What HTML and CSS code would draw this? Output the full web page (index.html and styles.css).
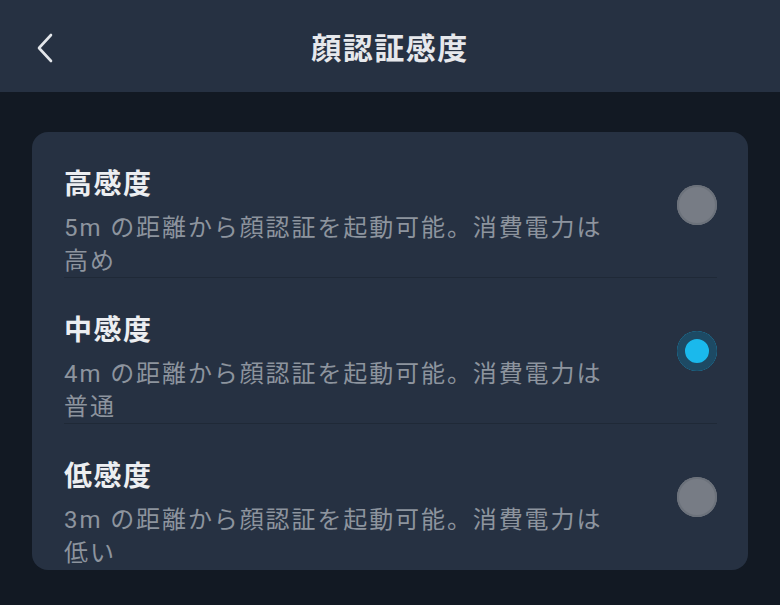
FILE: index.html
```html
<!DOCTYPE html>
<html lang="ja">
<head>
    <meta charset="UTF-8">
    <meta name="viewport" content="width=device-width, initial-scale=1.0">
    <title>顔認証感度</title>
    <link rel="stylesheet" href="styles.css">
</head>
<body>

    <header class="top-bar">
        <button class="back-btn" aria-label="戻る">
            <svg width="22" height="32" viewBox="0 0 22 32">
                <path d="M17 3 L5 16 L17 29" fill="none" stroke="#e3e6ea" stroke-width="2.6" stroke-linecap="round" stroke-linejoin="round"/>
            </svg>
        </button>
        <h1>顔認証感度</h1>
    </header>

    <div class="options-card">
        <div class="option">
            <div class="option-text">
                <div class="option-title">高感度</div>
                <div class="option-desc">5m の距離から顔認証を起動可能。消費電力は高め</div>
            </div>
            <span class="radio"></span>
        </div>
        <div class="option">
            <div class="option-text">
                <div class="option-title">中感度</div>
                <div class="option-desc">4m の距離から顔認証を起動可能。消費電力は普通</div>
            </div>
            <span class="radio checked"></span>
        </div>
        <div class="option">
            <div class="option-text">
                <div class="option-title">低感度</div>
                <div class="option-desc">3m の距離から顔認証を起動可能。消費電力は低い</div>
            </div>
            <span class="radio"></span>
        </div>
    </div>

</body>
</html>
```

FILE: styles.css
```css
body {
    margin: 0;
    font-family: Roboto, 'Noto Sans CJK JP', sans-serif;
    background-color: #121923;
    height: 605px;
}

.top-bar {
    height: 92px;
    background-color: #263142;
    display: flex;
    align-items: center;
    justify-content: center;
    position: relative;
}

.top-bar h1 {
    margin: 0;
    font-size: 30px;
    font-weight: 700;
    letter-spacing: 1.5px;
    color: #e6e8ec;
}

.back-btn {
    position: absolute;
    left: 34px;
    top: 32px;
    padding: 0;
    background: none;
    border: none;
    cursor: pointer;
}

.options-card {
    margin: 40px 32px 0;
    background-color: #263142;
    border-radius: 16px;
    overflow: hidden;
}

.option {
    height: 146px;
    margin: 0 31px 0 32px;
    display: flex;
    align-items: center;
    border-bottom: 1px solid #1f2937;
    box-sizing: border-box;
}

.option:last-child {
    border-bottom: none;
}

.option-text {
    flex: 1;
    align-self: flex-start;
    padding-top: 35px;
}

.option-title {
    font-size: 28px;
    font-weight: 700;
    line-height: 36px;
    letter-spacing: 1.5px;
    color: #eceef1;
}

.option-desc {
    width: 548px;
    margin-top: 9px;
    font-size: 24px;
    line-height: 33px;
    letter-spacing: 1.9px;
    color: #8d949e;
}

.radio {
    width: 40px;
    height: 40px;
    border-radius: 50%;
    background-color: #777c85;
    box-shadow: inset 0 0 0 2px #6c727b;
}

.radio.checked {
    background-color: #1ab9ec;
    box-shadow: inset 0 0 0 8px #1d4a64;
}
```
